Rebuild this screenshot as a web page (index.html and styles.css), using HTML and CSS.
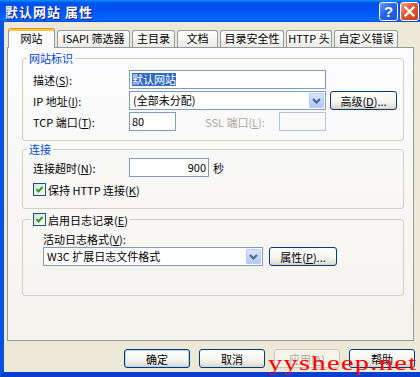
FILE: index.html
```html
<!DOCTYPE html>
<html lang="zh-CN">
<head>
<meta charset="UTF-8">
<meta name="viewport" content="width=device-width, initial-scale=1.0">
<title>默认网站 属性</title>
<link rel="stylesheet" href="styles.css">
</head>
<body>
<div class="window">
  <div class="titlebar">
    <span class="title">默认网站 属性</span>
    <div class="caption-buttons">
      <span class="cap cap-help">?</span>
      <span class="cap cap-close">
        <svg width="11" height="11" viewBox="0 0 11 11"><path d="M1.5 1.5 L9.5 9.5 M9.5 1.5 L1.5 9.5" stroke="#fff" stroke-width="2.2" stroke-linecap="square"/></svg>
      </span>
    </div>
  </div>

  <div class="client">
    <div class="tabs">
      <div class="tab active">网站</div>
      <div class="tab">ISAPI 筛选器</div>
      <div class="tab">主目录</div>
      <div class="tab">文档</div>
      <div class="tab">目录安全性</div>
      <div class="tab">HTTP 头</div>
      <div class="tab">自定义错误</div>
    </div>

    <div class="panel">
      <fieldset class="group group-id">
        <legend>网站标识</legend>
        <div class="group-body">
          <div class="row row-first">
            <span class="lbl">描述(<u>S</u>):</span>
            <div class="input wide"><span class="selected">默认网站</span></div>
          </div>
          <div class="row">
            <span class="lbl">IP 地址(<u>I</u>):</span>
            <div class="combo wide">
              <span class="combo-text">(全部未分配)</span>
              <span class="drop"><svg width="9" height="6" viewBox="0 0 9 6"><path d="M1 1 L4.5 4.5 L8 1" fill="none" stroke="#4D6185" stroke-width="2"/></svg></span>
            </div>
            <button class="btn btn-side">高级(<u>D</u>)...</button>
          </div>
          <div class="row">
            <span class="lbl">TCP 端口(<u>T</u>):</span>
            <div class="input port">80</div>
            <span class="lbl lbl-ssl disabled">SSL 端口(<u>L</u>):</span>
            <div class="input port input-disabled"></div>
          </div>
        </div>
      </fieldset>

      <fieldset class="group group-conn">
        <legend>连接</legend>
        <div class="group-body">
          <div class="row row-first">
            <span class="lbl">连接超时(<u>N</u>):</span>
            <div class="input timeout">900</div>
            <span class="unit">秒</span>
          </div>
          <div class="check-row">
            <span class="checkbox"><svg width="11" height="11" viewBox="0 0 11 11"><path d="M2.5 5 L4.5 7.5 L8.5 3" fill="none" stroke="#21A121" stroke-width="2"/></svg></span>
            <span>保持 HTTP 连接(<u>K</u>)</span>
          </div>
        </div>
      </fieldset>

      <fieldset class="group group-log">
        <legend>
          <span class="checkbox"><svg width="11" height="11" viewBox="0 0 11 11"><path d="M2.5 5 L4.5 7.5 L8.5 3" fill="none" stroke="#21A121" stroke-width="2"/></svg></span>
          <span>启用日志记录(<u>E</u>)</span>
        </legend>
        <div class="group-body log-body">
          <div class="log-label">活动日志格式(<u>V</u>):</div>
          <div class="row log-row">
            <div class="combo log-combo">
              <span class="combo-text">W3C 扩展日志文件格式</span>
              <span class="drop"><svg width="9" height="6" viewBox="0 0 9 6"><path d="M1 1 L4.5 4.5 L8 1" fill="none" stroke="#4D6185" stroke-width="2"/></svg></span>
            </div>
            <button class="btn btn-log">属性(<u>P</u>)...</button>
          </div>
        </div>
      </fieldset>
    </div>

    <div class="dialog-buttons">
      <button class="btn btn-dlg btn-default">确定</button>
      <button class="btn btn-dlg">取消</button>
      <button class="btn btn-dlg btn-disabled">应用(<u>A</u>)</button>
      <button class="btn btn-dlg">帮助</button>
    </div>
  </div>

  <div class="watermark">yysheep.net</div>
</div>
</body>
</html>
```

FILE: styles.css
```css
* {
  box-sizing: border-box;
}

body {
  margin: 0;
  font-family: "Noto Sans CJK SC", sans-serif;
  font-size: 11px;
  color: #000;
  background: #ECE9D8;
}

u {
  text-decoration: underline;
  text-underline-offset: 1px;
}

.window {
  position: relative;
  width: 420px;
  height: 377px;
  overflow: hidden;
  display: flex;
  flex-direction: column;
}

/* title bar */
.titlebar {
  flex: none;
  height: 22px;
  display: flex;
  align-items: center;
  justify-content: space-between;
  padding: 0 1px 0 5px;
  background: linear-gradient(#0997ff 0%, #0053ee 12%, #0050ee 40%, #0066ff 86%, #0066ff 92%, #005bff 95%, #003dd7 100%);
}

.title {
  color: #fff;
  font-weight: bold;
  font-size: 13px;
  letter-spacing: 1px;
  text-shadow: 1px 1px #0f1089;
}

.caption-buttons {
  display: flex;
  gap: 2px;
}

.cap {
  width: 19px;
  height: 19px;
  border: 1px solid #fff;
  border-radius: 3px;
  display: flex;
  align-items: center;
  justify-content: center;
}

.cap-help {
  background: linear-gradient(135deg, #6fa0ff, #2663f0 45%, #1b52d8);
  color: #fff;
  font: bold 15px "Liberation Sans", sans-serif;
}

.cap-close {
  background: linear-gradient(135deg, #f2a283, #e0582f 45%, #c8401c);
}

/* client area */
.client {
  flex: 1;
  display: flex;
  flex-direction: column;
  padding-top: 6px;
  background: #ECE9D8;
  border-left: 4px solid #0a52e0;
  border-bottom: 5px solid #0a3fcb;
}

.tabs {
  display: flex;
  align-items: flex-end;
  gap: 2px;
  height: 19px;
  margin-left: 4px;
}

.tab {
  flex: none;
  height: 17px;
  padding: 0;
  line-height: 15px;
  text-align: center;
  border: 1px solid #919B9C;
  border-bottom: none;
  border-radius: 3px 3px 0 0;
  background: linear-gradient(#fff, #ECEBE6);
  white-space: nowrap;
}

.tab:nth-child(1) { width: 47px; }
.tab:nth-child(2) { width: 73px; }
.tab:nth-child(3) { width: 43px; }
.tab:nth-child(4) { width: 41px; }
.tab:nth-child(5) { width: 64px; }
.tab:nth-child(6) { width: 46px; }
.tab:nth-child(7) { width: 64px; }

.tab.active {
  position: relative;
  z-index: 1;
  height: 20px;
  margin-bottom: -1px;
  line-height: 18px;
  background: #FCFCFE;
  border-top: 1px solid #E68B2C;
  box-shadow: inset 0 2px #FFC83C;
}

.panel {
  width: 407px;
  height: 294px;
  margin-left: 3px;
  padding-left: 14px;
  border: 1px solid #919B9C;
  background: linear-gradient(#FCFCFE, #F4F3EE);
}

/* group boxes */
.group {
  width: 382px;
  margin: 0;
  padding: 0;
  min-inline-size: 0;
  border: 1px solid #D0D0BF;
  border-radius: 3px;
}

.group legend {
  padding: 0 2px;
  margin-left: 4px;
  line-height: 12px;
  color: #0046D5;
}

.group-id {
  margin-top: 4px;
}

.group-conn {
  margin-top: 2px;
}

.group-log {
  margin-top: 4px;
}

.group-log legend {
  display: flex;
  align-items: center;
  gap: 2px;
  height: 13px;
  margin-left: 8px;
  color: #000;
}

.group-body {
  padding: 0 0 9px 10px;
}

.group-conn .group-body {
  padding-bottom: 12px;
}

.row {
  display: flex;
  align-items: center;
  height: 19px;
  margin-top: 2px;
}

.group-id .row-first {
  margin-top: 6px;
}

.group-conn .row-first {
  margin-top: 3px;
}

.lbl {
  width: 96px;
  flex: none;
  white-space: nowrap;
}

.lbl-ssl {
  width: 74px;
  margin-left: 29px;
}

.disabled {
  color: #ACA899;
}

.input {
  height: 19px;
  padding: 0 2px;
  line-height: 17px;
  border: 1px solid #7F9DB9;
  background: #fff;
  white-space: nowrap;
}

.wide {
  width: 197px;
}

.port {
  width: 47px;
}

.input-disabled {
  border-color: #B4C3D6;
  background: transparent;
}

.timeout {
  width: 80px;
  text-align: right;
}

.unit {
  margin-left: 4px;
}

.selected {
  display: inline-block;
  line-height: 13px;
  background: #316AC5;
  color: #fff;
}

.combo {
  height: 19px;
  display: flex;
  align-items: stretch;
  padding: 1px;
  border: 1px solid #7F9DB9;
  background: #fff;
}

.combo-text {
  flex: 1;
  padding-left: 2px;
  line-height: 15px;
  white-space: nowrap;
}

.drop {
  width: 15px;
  display: flex;
  align-items: center;
  justify-content: center;
  border: 1px solid #B7CCF7;
  border-radius: 1px;
  background: linear-gradient(#DCE7FE, #C0D3FB 60%, #B2C8F8);
}

.check-row {
  display: flex;
  align-items: center;
  gap: 2px;
  height: 13px;
  margin-top: 6px;
}

.checkbox {
  width: 13px;
  height: 13px;
  flex: none;
  display: flex;
  align-items: center;
  justify-content: center;
  border: 1px solid #1C5180;
  background: linear-gradient(135deg, #DCDCD7, #fff);
}

.log-body {
  padding: 0 0 29px 20px;
}

.log-label {
  margin-top: 7px;
  line-height: 12px;
}

.log-row {
  margin-top: 2px;
}

.log-combo {
  width: 220px;
}

/* buttons */
.btn {
  height: 19px;
  padding: 0;
  font: inherit;
  color: #000;
  border: 1px solid #003C74;
  border-radius: 3px;
  background: linear-gradient(#fff, #F3F3EF 60%, #E2DFD6 90%, #D6D0C5);
  white-space: nowrap;
}

.btn-side {
  width: 67px;
  margin-left: 4px;
}

.btn-log {
  width: 68px;
  margin-left: 6px;
}

.dialog-buttons {
  display: flex;
  justify-content: flex-end;
  gap: 9px;
  margin-top: 8px;
  padding-right: 5px;
}

.btn-dlg {
  width: 66px;
}

.btn-default {
  box-shadow: inset 0 0 0 1px #BCD0F2;
}

.btn-disabled {
  color: #ACA899;
  border-color: #C9C7BA;
  background: #F5F4EA;
}

/* watermark over the corner */
.watermark {
  position: absolute;
  left: 268px;
  top: 353px;
  font-family: "Liberation Serif", serif;
  font-size: 21px;
  line-height: 21px;
  letter-spacing: 1px;
  color: #f00;
  transform: scaleX(1.35);
  transform-origin: left top;
  white-space: nowrap;
}
```
